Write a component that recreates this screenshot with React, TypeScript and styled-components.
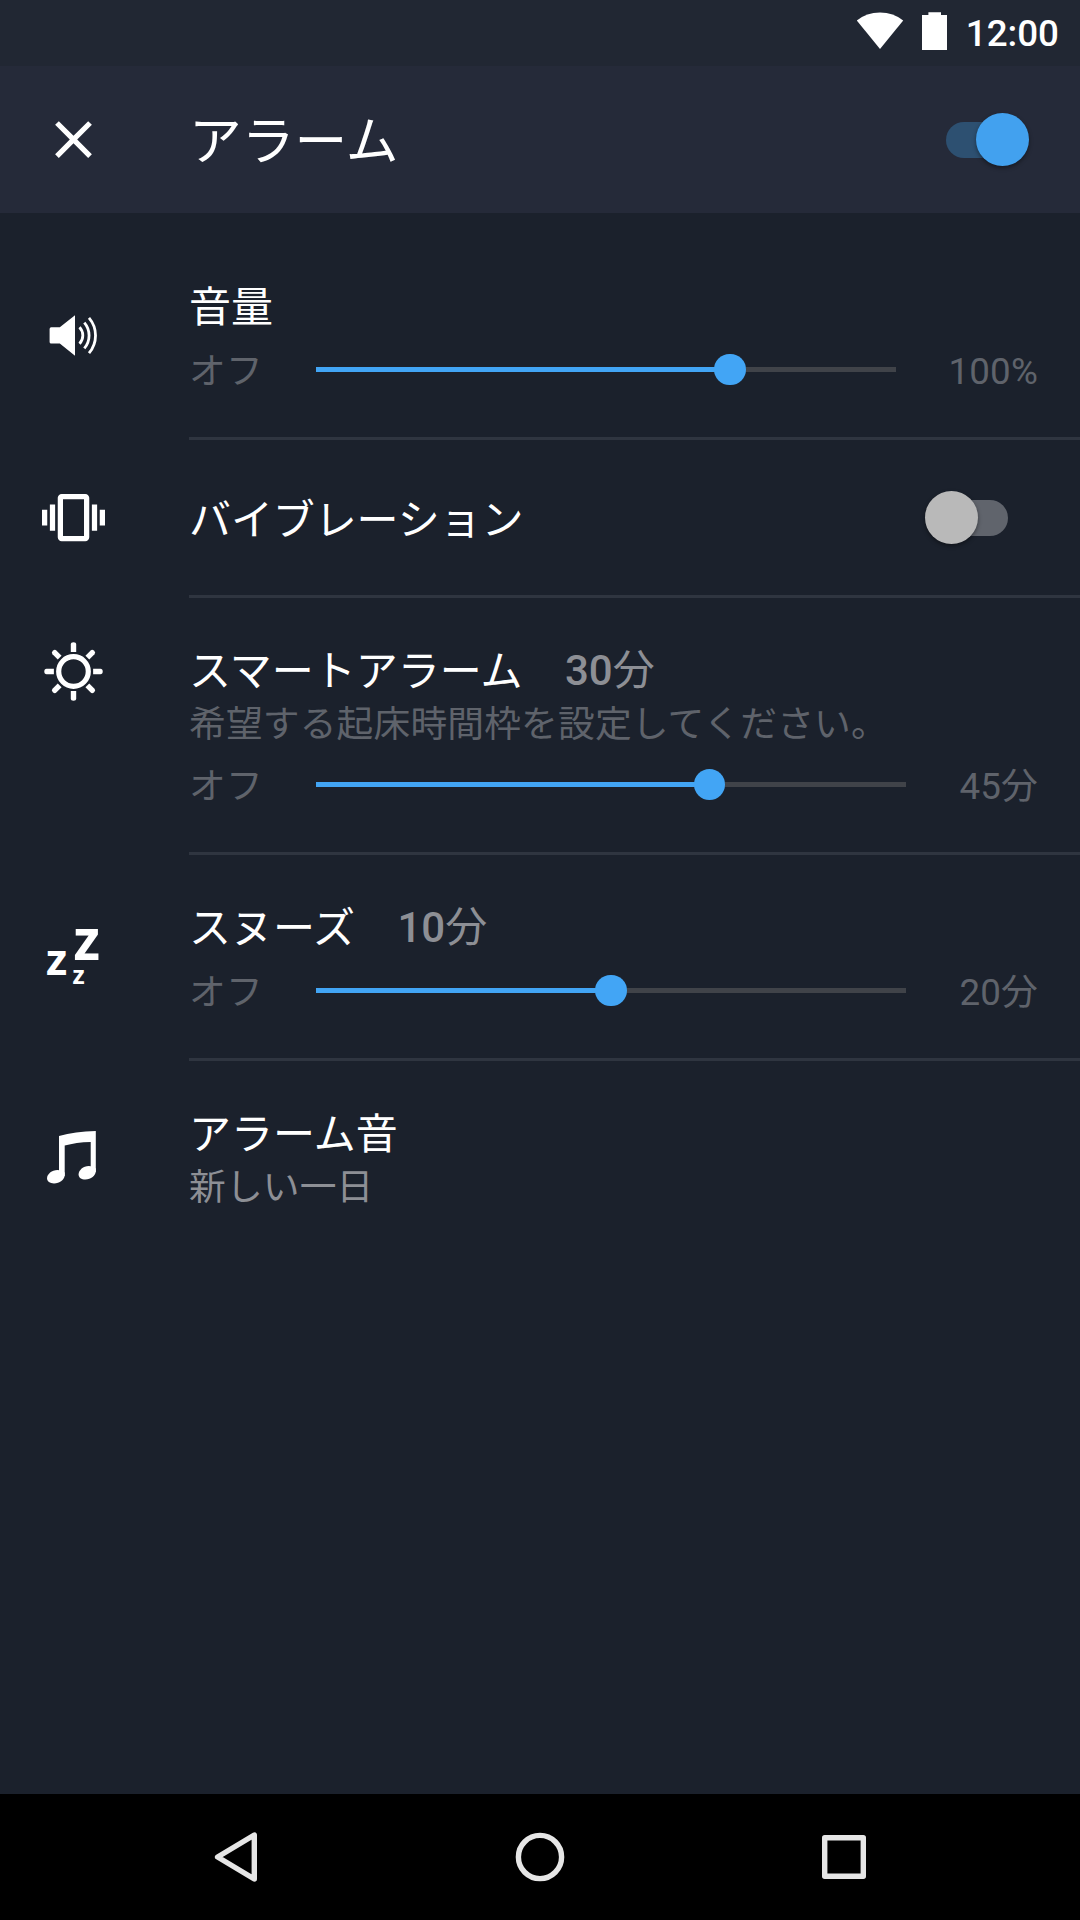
import React, { useState } from "react";
import styled, { createGlobalStyle } from "styled-components";

const GlobalStyle = createGlobalStyle`
  * { box-sizing: border-box; }
  body {
    margin: 0;
    background: #1b212c;
    color: #fff;
    font-family: Roboto, "Noto Sans CJK JP", sans-serif;
    font-weight: 400;
  }
`;

const Screen = styled.div`
  display: flex;
  flex-direction: column;
  width: 1080px;
  height: 1920px;
  overflow: hidden;
  background: #1b212c;
`;

const StatusBar = styled.div`
  display: flex;
  align-items: center;
  justify-content: space-between;
  height: 66px;
  padding: 0 21px 0 854px;
  background: #212733;
`;

const StatusIcons = styled.svg`
  flex: none;
  width: 100px;
  height: 66px;
  fill: #fff;
`;

const Clock = styled.span`
  padding-top: 2px;
  font-size: 36.75px;
  line-height: 64px;
  font-weight: 500;
`;

const AppBar = styled.header`
  display: flex;
  align-items: center;
  height: 147px;
  padding: 0 51px 0 42px;
  background: #252a39;
`;

const Icon = styled.svg`
  display: block;
  flex: none;
  width: 63px;
  height: 63px;
  fill: #fff;
  overflow: visible;
`;

const BarTitle = styled.h1`
  flex: 1;
  margin: 0 0 0 84px;
  padding-top: 4px;
  font-size: 52.75px;
  line-height: 62px;
  font-weight: 400;
`;

const SwitchRoot = styled.button<{ $on: boolean }>`
  position: relative;
  display: flex;
  align-items: center;
  justify-content: ${(p) => (p.$on ? "flex-start" : "flex-end")};
  width: 83px;
  height: 54px;
  padding: 0;
  border: 0;
  background: none;
`;

const SwitchTrack = styled.span<{ $on: boolean }>`
  width: 75px;
  height: 36px;
  border-radius: 18px;
  background: ${(p) => (p.$on ? "#2d5071" : "#60646c")};
`;

const SwitchThumb = styled.span<{ $on: boolean }>`
  position: absolute;
  top: 0.5px;
  ${(p) => (p.$on ? "right: 0;" : "left: 0;")}
  width: 53px;
  height: 53px;
  border-radius: 50%;
  background: ${(p) => (p.$on ? "#42a1ef" : "#b9b9b9")};
  box-shadow: 0 2px 4px rgba(0, 0, 0, 0.4);
`;

const List = styled.main`
  flex: 1;
  padding-top: 21px;
`;

const Row = styled.section<{ $top?: boolean }>`
  display: flex;
  align-items: ${(p) => (p.$top ? "flex-start" : "center")};
`;

const IconCell = styled.div<{ $top?: boolean }>`
  flex: none;
  width: 189px;
  padding: ${(p) => (p.$top ? "42px 0 0 42px" : "0 0 3px 42px")};
`;

const Content = styled.div<{ $last?: boolean }>`
  flex: 1;
  padding: 49px 42px 44px 0;
  border-bottom: 3px solid ${(p) => (p.$last ? "transparent" : "#2f3540")};
`;

const SwitchContent = styled(Content)`
  display: flex;
  align-items: center;
  justify-content: space-between;
  height: 158px;
  padding: 0 72px 0 0;
`;

const Title = styled.div`
  display: flex;
  font-size: 42px;
  line-height: 49px;
`;

const SwitchTitle = styled(Title)`
  padding-top: 5px;
  letter-spacing: -0.1px;
`;

const Value = styled.span`
  margin: -1px 0 0 42.5px;
  color: #8d8f95;
`;

const Digits = styled.span`
  font-weight: 500;
`;

const Caption = styled.div<{ $bright?: boolean }>`
  margin-top: 7px;
  font-size: 36.75px;
  line-height: 43px;
  letter-spacing: 0.15px;
  color: ${(p) => (p.$bright ? "#8d8f95" : "#5f636b")};
`;

const SliderRow = styled.div<{ $spaced?: boolean }>`
  display: flex;
  align-items: flex-start;
  gap: 53px;
  margin-top: ${(p) => (p.$spaced ? 19 : 18)}px;
`;

const EndLabel = styled.span`
  flex: none;
  font-size: 36.75px;
  line-height: 43px;
  letter-spacing: 0.15px;
  color: #5f636b;
`;

const SliderRoot = styled.div`
  position: relative;
  display: flex;
  align-items: center;
  flex: 1;
  height: 39px;
`;

const Track = styled.div`
  width: 100%;
  height: 5px;
  background: #404349;
`;

const Fill = styled.div`
  height: 100%;
  background: #42a5f5;
`;

const Thumb = styled.div`
  position: absolute;
  top: 3.75px;
  width: 31.5px;
  height: 31.5px;
  margin-left: -15.75px;
  border-radius: 50%;
  background: #42a5f5;
`;

const NavBar = styled.nav`
  display: flex;
  align-items: center;
  justify-content: center;
  gap: 244px;
  height: 126px;
  background: #000;
`;

const NavIcon = styled.svg`
  width: 60px;
  height: 60px;
  fill: none;
  stroke: #e6e6e6;
  stroke-width: 5.4;
  stroke-linejoin: round;
`;

const ZText = styled.text`
  font-family: "Open Sans", "Noto Sans", sans-serif;
  font-weight: 700;
`;

function Switch({ initial }: { initial: boolean }) {
  const [on, setOn] = useState(initial);
  return (
    <SwitchRoot $on={on} role="switch" aria-checked={on} onClick={() => setOn(!on)}>
      <SwitchTrack $on={on} />
      <SwitchThumb $on={on} />
    </SwitchRoot>
  );
}

function Slider({ ratio, max, spaced }: { ratio: number; max: string; spaced?: boolean }) {
  const percent = `${ratio * 100}%`;
  return (
    <SliderRow $spaced={spaced}>
      <EndLabel>オフ</EndLabel>
      <SliderRoot>
        <Track>
          <Fill style={{ width: percent }} />
        </Track>
        <Thumb style={{ left: percent }} />
      </SliderRoot>
      <EndLabel>{max}</EndLabel>
    </SliderRow>
  );
}

const VolumeIcon = () => (
  <Icon viewBox="0 0 63 63">
    <path d="M9.2 23.3H17.8L33 11.3V51.7L17.8 39.6H9.2Q7.6 39.6 7.6 38V24.9Q7.6 23.3 9.2 23.3Z" />
    <g fill="none" stroke="#fff" strokeWidth="2.8">
      <path d="M37.5 23.3A11.8 11.8 0 0 1 37.5 39.7" />
      <path d="M42.3 18.6A19.8 19.8 0 0 1 42.3 44.4" />
      <path d="M47 13.8A27.3 27.3 0 0 1 47 49.2" />
    </g>
  </Icon>
);

const VibrationIcon = () => (
  <Icon viewBox="0 0 24 24">
    <path d="M0 15h2V9H0v6zm3 2h2V7H3v10zm19-8v6h2V9h-2zm-3 8h2V7h-2v10zM16.5 3h-9C6.67 3 6 3.67 6 4.5v15c0 .83.67 1.5 1.5 1.5h9c.83 0 1.5-.67 1.5-1.5v-15c0-.83-.67-1.5-1.5-1.5zM16 19H8V5h8v14z" />
  </Icon>
);

const SunIcon = () => (
  <Icon viewBox="-31.5 -31.5 63 63">
    <circle r="14.8" fill="none" stroke="#fff" strokeWidth="5.2" />
    {[0, 45, 90, 135, 180, 225, 270, 315].map((angle) => (
      <path
        key={angle}
        transform={`rotate(${angle})`}
        d="M-2.7 -19.6V-27Q-2.7 -29.2 0 -29.2Q2.7 -29.2 2.7 -27V-19.6Z"
      />
    ))}
  </Icon>
);

const SnoozeIcon = () => (
  <Icon viewBox="0 0 63 63">
    <ZText transform="translate(31.4 34.9) scale(0.97 1.02)" fontSize="56">z</ZText>
    <ZText x="3.9" y="49.6" fontSize="43.5">z</ZText>
    <ZText x="30.5" y="59.2" fontSize="25">z</ZText>
  </Icon>
);

const MusicIcon = () => (
  <Icon viewBox="0 0 63 63">
    <path d="M17 10.1Q33 5.1 53.8 4.9V46H48.7V15.9Q34 16.3 22.7 19.5V50H17Z" />
    <path d="M22.7 46.5V49C22.7 53.5 17.5 57.4 12 57.4C7.8 57.4 5 55.4 5 52.3C5 48.1 9.8 43.9 15.5 43.9C18 43.9 20 44.6 22.7 46.5Z" />
    <path d="M53.8 42.5V45C53.8 49.5 48.8 53.5 43.4 53.5C39.2 53.5 36.6 51.5 36.6 48.4C36.6 44.2 41.2 40 46.8 40C49.3 40 51.3 40.7 53.8 42.5Z" />
  </Icon>
);

export default function App() {
  return (
    <Screen lang="ja">
      <GlobalStyle />
      <StatusBar>
        <StatusIcons viewBox="0 0 100 66">
          <path d="M2.8 20.6Q12.6 12.6 26 12.6Q39.4 12.6 49.2 20.6L26 49Z" />
          <path d="M74.4 15V12.2H87V15H93V50H68V15Z" />
        </StatusIcons>
        <Clock>12:00</Clock>
      </StatusBar>
      <AppBar>
        <Icon viewBox="0 0 24 24">
          <path d="M19 6.41L17.59 5 12 10.59 6.41 5 5 6.41 10.59 12 5 17.59 6.41 19 12 13.41 17.59 19 19 17.59 13.41 12z" />
        </Icon>
        <BarTitle>アラーム</BarTitle>
        <Switch initial={true} />
      </AppBar>
      <List>
        <Row>
          <IconCell><VolumeIcon /></IconCell>
          <Content>
            <Title>音量</Title>
            <Slider ratio={5 / 7} max="100%" />
          </Content>
        </Row>
        <Row>
          <IconCell><VibrationIcon /></IconCell>
          <SwitchContent>
            <SwitchTitle>バイブレーション</SwitchTitle>
            <Switch initial={false} />
          </SwitchContent>
        </Row>
        <Row $top>
          <IconCell $top><SunIcon /></IconCell>
          <Content>
            <Title>
              スマートアラーム
              <Value><Digits>30</Digits>分</Value>
            </Title>
            <Caption>希望する起床時間枠を設定してください。</Caption>
            <Slider ratio={30 / 45} max="45分" spaced />
          </Content>
        </Row>
        <Row>
          <IconCell><SnoozeIcon /></IconCell>
          <Content>
            <Title>
              スヌーズ
              <Value><Digits>10</Digits>分</Value>
            </Title>
            <Slider ratio={10 / 20} max="20分" />
          </Content>
        </Row>
        <Row>
          <IconCell><MusicIcon /></IconCell>
          <Content $last>
            <Title>アラーム音</Title>
            <Caption $bright>新しい一日</Caption>
          </Content>
        </Row>
      </List>
      <NavBar>
        <NavIcon viewBox="0 0 60 60">
          <path d="M11.6 30L48.3 8V52Z" />
        </NavIcon>
        <NavIcon viewBox="0 0 60 60">
          <circle cx="30" cy="30" r="21.6" />
        </NavIcon>
        <NavIcon viewBox="0 0 60 60">
          <rect x="10.7" y="10.7" width="38.6" height="38.6" />
        </NavIcon>
      </NavBar>
    </Screen>
  );
}
